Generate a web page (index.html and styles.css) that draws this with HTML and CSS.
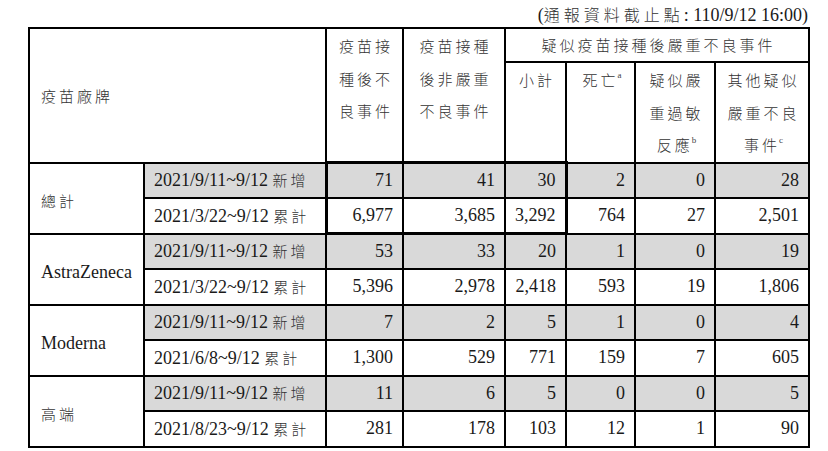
FILE: index.html
```html
<!DOCTYPE html>
<html lang="zh-Hant">
<head>
<meta charset="utf-8">
<link rel="stylesheet" href="styles.css">
</head>
<body>
<div class="page">
  <div class="note">(<span class="zh">通報資料截止點</span>: 110/9/12 16:00)</div>
  <table class="grid">
    <colgroup>
      <col class="c-brand"><col class="c-date"><col class="c-1"><col class="c-2"><col class="c-3"><col class="c-4"><col class="c-5"><col class="c-6">
    </colgroup>
    <thead>
      <tr class="h1">
        <th colspan="2" rowspan="2" class="brandhead"><span class="zh">疫苗廠牌</span></th>
        <th rowspan="2" class="top"><span class="zh">疫苗接<br>種後不<br>良事件</span></th>
        <th rowspan="2" class="top"><span class="zh">疫苗接種<br>後非嚴重<br>不良事件</span></th>
        <th colspan="4" class="group"><span class="zh">疑似疫苗接種後嚴重不良事件</span></th>
      </tr>
      <tr class="h2">
        <th class="top"><span class="zh">小計</span></th>
        <th class="top"><span class="zh">死亡<sup>a</sup></span></th>
        <th class="top"><span class="zh">疑似嚴<br>重過敏<br>反應<sup>b</sup></span></th>
        <th class="top"><span class="zh">其他疑似<br>嚴重不良<br>事件<sup>c</sup></span></th>
      </tr>
    </thead>
    <tbody>
      <tr class="new">
        <td rowspan="2" class="brand"><span class="zh">總計</span></td>
        <td class="date">2021/9/11~9/12 <span class="zh">新增</span></td>
        <td class="num bx-l bx-t">71</td><td class="num bx-t">41</td><td class="num bx-t bx-r">30</td><td class="num">2</td><td class="num">0</td><td class="num">28</td>
      </tr>
      <tr class="cum">
        <td class="date">2021/3/22~9/12 <span class="zh">累計</span></td>
        <td class="num bx-l bx-b">6,977</td><td class="num bx-b">3,685</td><td class="num bx-b bx-r">3,292</td><td class="num">764</td><td class="num">27</td><td class="num">2,501</td>
      </tr>
      <tr class="new">
        <td rowspan="2" class="brand">AstraZeneca</td>
        <td class="date">2021/9/11~9/12 <span class="zh">新增</span></td>
        <td class="num">53</td><td class="num">33</td><td class="num">20</td><td class="num">1</td><td class="num">0</td><td class="num">19</td>
      </tr>
      <tr class="cum">
        <td class="date">2021/3/22~9/12 <span class="zh">累計</span></td>
        <td class="num">5,396</td><td class="num">2,978</td><td class="num">2,418</td><td class="num">593</td><td class="num">19</td><td class="num">1,806</td>
      </tr>
      <tr class="new">
        <td rowspan="2" class="brand">Moderna</td>
        <td class="date">2021/9/11~9/12 <span class="zh">新增</span></td>
        <td class="num">7</td><td class="num">2</td><td class="num">5</td><td class="num">1</td><td class="num">0</td><td class="num">4</td>
      </tr>
      <tr class="cum">
        <td class="date">2021/6/8~9/12 <span class="zh">累計</span></td>
        <td class="num">1,300</td><td class="num">529</td><td class="num">771</td><td class="num">159</td><td class="num">7</td><td class="num">605</td>
      </tr>
      <tr class="new">
        <td rowspan="2" class="brand"><span class="zh">高端</span></td>
        <td class="date">2021/9/11~9/12 <span class="zh">新增</span></td>
        <td class="num">11</td><td class="num">6</td><td class="num">5</td><td class="num">0</td><td class="num">0</td><td class="num">5</td>
      </tr>
      <tr class="cum">
        <td class="date">2021/8/23~9/12 <span class="zh">累計</span></td>
        <td class="num">281</td><td class="num">178</td><td class="num">103</td><td class="num">12</td><td class="num">1</td><td class="num">90</td>
      </tr>
    </tbody>
  </table>
</div>
</body>
</html>
```
FILE: styles.css
```css
html, body {
  margin: 0;
  padding: 0;
  background: #ffffff;
}
body {
  font-family: "Liberation Serif", "Noto Sans CJK TC", serif;
  font-size: 18px;
  color: #1a1a1a;
}
.page {
  width: 782px;
  margin-left: 28px;
}
.note {
  height: 27px;
  box-sizing: border-box;
  padding-top: 1px;
  padding-right: 2px;
  line-height: 26px;
  text-align: right;
  font-size: 18px;
}
.zh {
  font-family: "Noto Sans CJK TC", sans-serif;
  font-size: 15px;
  font-weight: 300;
  letter-spacing: 3px;
  color: #333333;
}
.note .zh {
  font-size: 16px;
  letter-spacing: 4px;
}
.grid {
  width: 782px;
  border-collapse: collapse;
  table-layout: fixed;
}
.c-brand { width: 115px; }
.c-date { width: 182px; }
.c-1 { width: 77px; }
.c-2 { width: 102px; }
.c-3 { width: 61px; }
.c-4 { width: 69px; }
.c-5 { width: 80px; }
.c-6 { width: 94px; }
.grid th, .grid td {
  border: 2px solid #000000;
  padding: 0;
  font-weight: normal;
}
.h1 { height: 34px; }
.h2 { height: 100px; }
.grid th.top {
  vertical-align: top;
  text-align: center;
  line-height: 32.5px;
  padding-top: 1px;
  padding-left: 3px;
}
.grid th.group {
  text-align: center;
  vertical-align: middle;
  padding-left: 3px;
}
.grid th.brandhead {
  text-align: left;
  vertical-align: middle;
  padding-left: 11px;
  padding-top: 2px;
}
.grid sup {
  font-family: "Liberation Serif", serif;
  font-size: 9px;
  letter-spacing: 0;
  vertical-align: top;
  line-height: 22px;
  margin-left: -1px;
  color: #444444;
}
.grid tbody tr { height: 35.5px; }
.grid td.brand {
  background: #ffffff;
  padding-left: 11px;
  padding-top: 6px;
  vertical-align: middle;
}
.grid td.date {
  padding-left: 9px;
  white-space: nowrap;
}
.grid td.num {
  text-align: right;
  padding-right: 9px;
}
.grid tr.new td { background: #d9d9d9; }
.grid tr.new td.brand { background: #ffffff; }
.grid td.bx-l { border-left: 3px solid #000000; }
.grid td.bx-r { border-right: 3px solid #000000; }
.grid td.bx-t { border-top: 3px solid #000000; }
.grid td.bx-b { border-bottom: 3px solid #000000; }
```
